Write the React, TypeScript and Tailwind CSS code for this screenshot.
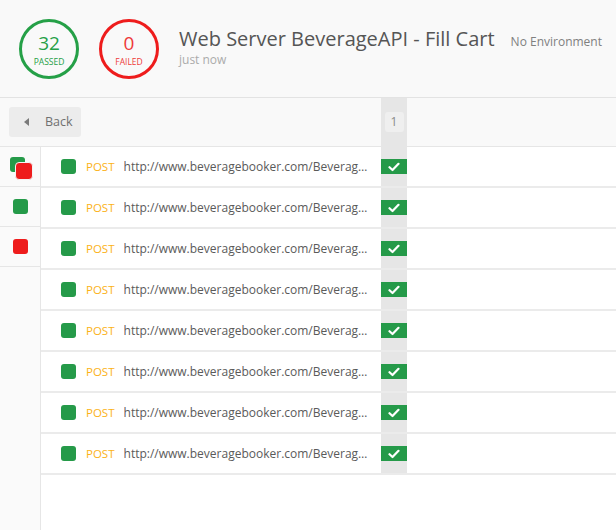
import React from 'react';

const rows = Array.from({ length: 8 }, () => ({
  method: 'POST',
  url: 'http://www.beveragebooker.com/BeverageAPI/api/cart/fill',
}));

function CheckCell() {
  return (
    <div className="flex h-[15px] w-full items-center justify-center bg-[#259a49]">
      <svg width="12" height="10" viewBox="0 0 12 10">
        <path d="M1.5 5.2 L4.5 8 L10.5 1.8" fill="none" stroke="#ffffff" strokeWidth="2.2" strokeLinecap="round" strokeLinejoin="round" />
      </svg>
    </div>
  );
}

function StatCircle({ value, label, tone }: { value: number; label: string; tone: 'pass' | 'fail' }) {
  const pass = tone === 'pass';
  return (
    <div
      className={`flex h-[60px] w-[60px] flex-col items-center justify-center rounded-full border-[3px] ${
        pass ? 'border-[#25a047] text-[#25a047]' : 'border-[#ee1c1c] text-[#ee3a3a]'
      }`}
    >
      <div className="text-[19px] leading-[24px]">{value}</div>
      <div className="mt-[2px] text-[8.5px] leading-[10px]">{label}</div>
    </div>
  );
}

export default function App() {
  return (
    <div className="flex h-[530px] w-[616px] flex-col bg-white font-['Open_Sans',sans-serif] text-[#505050]">
      <header className="flex h-[98px] shrink-0 items-center border-b border-[#e3e3e3] bg-[#f9f9f9] pl-[19px]">
        <StatCircle value={32} label="PASSED" tone="pass" />
        <div className="ml-[20px]">
          <StatCircle value={0} label="FAILED" tone="fail" />
        </div>
        <div className="ml-[20px] mt-[-4px] flex flex-col">
          <div className="flex items-baseline">
            <span className="text-[20px] leading-[26px] text-[#555]">Web Server BeverageAPI - Fill Cart</span>
            <span className="ml-[16px] text-[12px] text-[#808080]">No Environment</span>
          </div>
          <span className="text-[12px] leading-[16px] text-[#ababab]">just now</span>
        </div>
      </header>

      <div className="flex h-[49px] shrink-0 border-b border-[#e6e6e6] bg-[#f9f9f9]">
        <div className="flex w-[381px] items-center pl-[9px]">
          <button className="flex h-[30px] w-[72px] items-center rounded-[3px] bg-[#ececec] pl-[15px] text-[12.5px] text-[#707070]">
            <svg width="5" height="8" viewBox="0 0 5 8" className="mr-[16px]">
              <path d="M5 0 L0 4 L5 8 Z" fill="#7a7a7a" />
            </svg>
            Back
          </button>
        </div>
        <div className="flex w-[26px] items-center justify-center bg-[#e6e6e6]">
          <div className="flex h-[20px] w-[19px] items-center justify-center rounded-[3px] bg-[#efefef] text-[12px] text-[#8a8a8a]">
            1
          </div>
        </div>
      </div>

      <div className="flex flex-1">
        <aside className="w-[41px] shrink-0 border-r border-[#e6e6e6] bg-[#fafafa]">
          <div className="relative h-[40px] border-b border-[#e6e6e6]">
            <div className="absolute left-[10px] top-[10px] h-[15px] w-[15px] rounded-[3px] bg-[#259a49]" />
            <div className="absolute left-[15px] top-[15px] h-[18px] w-[18px] rounded-[4px] border border-[#f3f3f3] bg-[#ee1c1c]" />
          </div>
          <div className="flex h-[40px] items-center justify-center border-b border-[#e6e6e6]">
            <div className="ml-[1px] h-[15px] w-[15px] rounded-[3px] bg-[#259a49]" />
          </div>
          <div className="flex h-[40px] items-center justify-center border-b border-[#e6e6e6]">
            <div className="ml-[1px] h-[15px] w-[15px] rounded-[3px] bg-[#ee1c1c]" />
          </div>
        </aside>

        <div className="flex flex-1 flex-col">
          {rows.map((row, i) => (
            <div key={i} className="flex h-[41px] border-b-2 border-[#ebebeb]">
              <div className="flex w-[340px] min-w-0 items-center pl-[20px] pr-[12px]">
                <div className="h-[15px] w-[15px] shrink-0 rounded-[3px] bg-[#259a49]" />
                <span className="ml-[10px] shrink-0 text-[11.5px] text-[#fbb217]">{row.method}</span>
                <span className="ml-[9px] truncate text-[12px] text-[#5a5a5a]">{row.url}</span>
              </div>
              <div className="flex w-[26px] items-center bg-[#e6e6e6]">
                <CheckCell />
              </div>
            </div>
          ))}
          <div className="flex flex-1">
            <div className="w-[340px]" />
          </div>
        </div>
      </div>
    </div>
  );
}
